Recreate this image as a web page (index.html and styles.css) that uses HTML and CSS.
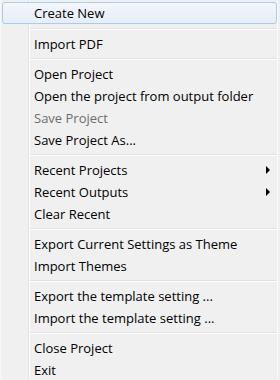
FILE: index.html
```html
<!DOCTYPE html>
<html>
<head>
<meta charset="utf-8">
<link rel="stylesheet" href="styles.css">
</head>
<body>
<div class="menu">
  <div class="item active">Create New</div>
  <div class="sep"></div>
  <div class="item">Import PDF</div>
  <div class="sep"></div>
  <div class="item">Open Project</div>
  <div class="item">Open the project from output folder</div>
  <div class="item disabled">Save Project</div>
  <div class="item">Save Project As...</div>
  <div class="sep"></div>
  <div class="item"><span>Recent Projects</span><i class="arrow"></i></div>
  <div class="item"><span>Recent Outputs</span><i class="arrow"></i></div>
  <div class="item">Clear Recent</div>
  <div class="sep"></div>
  <div class="item">Export Current Settings as Theme</div>
  <div class="item">Import Themes</div>
  <div class="sep"></div>
  <div class="item">Export the template setting ...</div>
  <div class="item">Import the template setting ...</div>
  <div class="sep"></div>
  <div class="item">Close Project</div>
  <div class="item">Exit</div>
</div>
</body>
</html>
```
FILE: styles.css
```css
html, body {
  margin: 0;
  padding: 0;
  background: #f0f0f0;
}
.menu {
  width: 280px;
  height: 380px;
  box-sizing: border-box;
  padding: 2px 3px 0 2px;
  overflow: hidden;
  font-family: "Open Sans", "Noto Sans", sans-serif;
  font-size: 13px;
  color: #000;
  background:
    linear-gradient(to right, transparent 28px, #e2e3e3 28px, #e2e3e3 29px, #ffffff 29px, #ffffff 30px, transparent 30px),
    linear-gradient(to left, transparent 2px, #fbfbfb 2px, #fbfbfb 3px, transparent 3px),
    linear-gradient(to right, #f7f7f7 0, #f7f7f7 1px, transparent 1px),
    #f0f0f0;
}
.item {
  height: 22px;
  line-height: 22px;
  padding-left: 32px;
  padding-top: 1px;
  display: flex;
  align-items: center;
  box-sizing: border-box;
  white-space: nowrap;
}
.item.active {
  border: 1px solid #a9cbf2;
  border-radius: 3px;
  padding-left: 31px;
  padding-top: 0;
  background: linear-gradient(to bottom, rgba(244,247,252,0.85), rgba(229,237,248,0.85));
}
.item.disabled {
  color: #6d6d6d;
}
.arrow {
  margin-left: auto;
  margin-right: 7px;
  width: 0;
  height: 0;
  border-left: 4px solid #000;
  border-top: 4px solid transparent;
  border-bottom: 4px solid transparent;
}
.sep {
  height: 8px;
  margin-left: 28px;
  background: linear-gradient(to bottom, transparent 4px, #e0e0e0 4px, #e0e0e0 5px, #ffffff 5px, #ffffff 6px, transparent 6px);
}
```
